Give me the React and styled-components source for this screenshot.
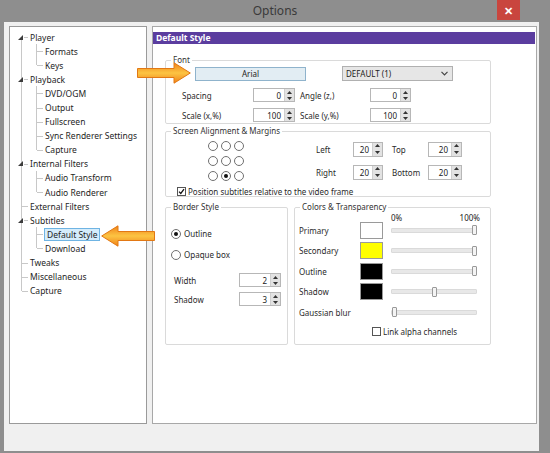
import React from "react";
import styled, { createGlobalStyle } from "styled-components";

const GlobalStyle = createGlobalStyle`
  html, body {
    margin: 0;
    padding: 0;
    background: #8e8e8e;
  }
  body {
    font-family: "Noto Sans", "Open Sans", sans-serif;
    color: #222;
  }
`;

const tree = [
  { label: "Player", children: ["Formats", "Keys"] },
  {
    label: "Playback",
    children: ["DVD/OGM", "Output", "Fullscreen", "Sync Renderer Settings", "Capture"],
  },
  { label: "Internal Filters", children: ["Audio Transform", "Audio Renderer"] },
  { label: "External Filters" },
  { label: "Subtitles", children: ["Default Style", "Download"] },
  { label: "Tweaks" },
  { label: "Miscellaneous" },
  { label: "Capture" },
];

const colors = [
  { name: "Primary", swatch: "#ffffff", alpha: 100 },
  { name: "Secondary", swatch: "#ffff00", alpha: 100 },
  { name: "Outline", swatch: "#000000", alpha: 100 },
  { name: "Shadow", swatch: "#000000", alpha: 50 },
  { name: "Gaussian blur", alpha: 0 },
];

/* ---------- window frame ---------- */

const Window = styled.div`
  position: relative;
  width: 550px;
  height: 453px;
  background: #8e8e8e;
  display: flex;
  flex-direction: column;
  overflow: hidden;
`;

const TitleBar = styled.div`
  height: 22px;
  display: grid;
  grid-template-columns: 1fr auto 1fr;
  align-items: start;
`;

const Title = styled.div`
  grid-column: 2;
  line-height: 22px;
  font-size: 12px;
  color: #3a3a3a;
`;

const CloseButton = styled.div`
  grid-column: 3;
  justify-self: end;
  margin-right: 30px;
  width: 23px;
  height: 20px;
  background: #c9453e;
  color: #fff;
  font-size: 11px;
  font-weight: bold;
  display: flex;
  align-items: center;
  justify-content: center;
`;

const Client = styled.div`
  flex: 1;
  margin: 0 11px 2px 4px;
  background: #f0f0f0;
  padding: 4px 2px 27px 5px;
  display: flex;
  gap: 5px;
`;

/* ---------- navigation tree ---------- */

const TreePanel = styled.div`
  width: 138px;
  box-sizing: border-box;
  background: #fff;
  border: 1px solid #9a9a9a;
  padding: 3px 0 0 4px;
  font-size: 8.5px;
`;

const TreeRow = styled.div`
  height: 14.1px;
  display: flex;
  align-items: center;
`;

const Guide = styled.span`
  position: relative;
  flex: 0 0 15px;
  height: 100%;
  display: flex;
  align-items: center;

  &::before {
    content: "";
    display: ${(p) => (p.$v ? "block" : "none")};
    position: absolute;
    left: 7px;
    top: ${(p) => (p.$v === "bottom" ? "50%" : "0")};
    height: ${(p) => (p.$v === "full" ? "100%" : "50%")};
    border-left: 1px solid #c8c8c8;
  }

  &::after {
    content: "";
    display: ${(p) => (p.$h ? "block" : "none")};
    position: absolute;
    left: ${(p) => (p.$toggle ? 10 : 8)}px;
    top: 50%;
    width: ${(p) => (p.$toggle ? 4 : 6)}px;
    border-top: 1px solid #c8c8c8;
  }

  svg {
    position: relative;
    margin-left: 4px;
  }
`;

const TreeLabel = styled.span`
  margin-left: ${(p) => (p.$selected ? 0 : 1)}px;
  padding: 0 ${(p) => (p.$selected ? 2 : 0)}px;
  line-height: 11px;
  white-space: nowrap;
  color: #1e1e1e;
  background: ${(p) => (p.$selected ? "#d5ecfb" : "transparent")};
  border: ${(p) => (p.$selected ? "1px solid #6fb4e3" : "none")};
`;

const Expander = () => (
  <svg width="5" height="5" viewBox="0 0 5 5">
    <path d="M5 0 L5 5 L0 5 Z" fill="#3c3c3c" />
  </svg>
);

function TreeView() {
  const rows = [];
  tree.forEach((node, i) => {
    const lastRoot = i === tree.length - 1;
    if (node.children) {
      rows.push({
        key: node.label,
        label: node.label,
        guides: [{ v: i === 0 ? "bottom" : "full", h: true, toggle: true }],
      });
      node.children.forEach((child, j) => {
        const lastChild = j === node.children.length - 1;
        rows.push({
          key: node.label + "/" + child,
          label: child,
          selected: child === "Default Style",
          guides: [{ v: "full" }, { v: lastChild ? "top" : "full", h: true }],
        });
      });
    } else {
      rows.push({
        key: node.label,
        label: node.label,
        guides: [{ v: lastRoot ? "top" : "full", h: true }],
      });
    }
  });

  return (
    <TreePanel>
      {rows.map((row) => (
        <TreeRow key={row.key}>
          {row.guides.map((g, k) => (
            <Guide key={k} $v={g.v} $h={g.h} $toggle={g.toggle}>
              {g.toggle && <Expander />}
            </Guide>
          ))}
          <TreeLabel $selected={row.selected}>{row.label}</TreeLabel>
        </TreeRow>
      ))}
    </TreePanel>
  );
}

/* ---------- settings page ---------- */

const Page = styled.div`
  flex: 1;
  background: #fff;
  border: 1px solid #a8a8a8;
  padding: 5px 1px 0 0;
  display: flex;
  flex-direction: column;
  font-size: 8px;
`;

const PageHeader = styled.div`
  height: 12px;
  line-height: 12px;
  background: #5b3d9f;
  color: #fff;
  font-weight: bold;
  font-size: 8.5px;
  padding-left: 3px;
`;

const Content = styled.div`
  width: 326px;
  padding: 11px 0 0 12px;
  display: flex;
  flex-direction: column;
`;

const Group = styled.fieldset`
  margin: ${(p) => p.$top || 0}px 0 0;
  width: ${(p) => p.$w}px;
  height: ${(p) => p.$h}px;
  box-sizing: border-box;
  border: 1px solid #dadada;
  border-radius: 2px;
  padding: ${(p) => p.$pad || 0}px 0 0 0;
  min-width: 0;
`;

const Legend = styled.legend`
  margin-left: 5px;
  padding: 0 2px;
  line-height: 10px;
  font-size: 8px;
  color: #333;
`;

const Row = styled.div`
  display: flex;
  align-items: center;
  padding-left: ${(p) => p.$indent || 0}px;
  margin-top: ${(p) => p.$top || 0}px;
  gap: ${(p) => p.$gap || 0}px;
`;

const Label = styled.span`
  white-space: nowrap;
  color: #2a2a2a;
`;

const FontButton = styled.div`
  width: 111px;
  height: 14px;
  box-sizing: border-box;
  background: #e2edf3;
  border: 1px solid #8fb3cc;
  display: flex;
  align-items: center;
  justify-content: center;
`;

const Select = styled.div`
  margin-left: 36px;
  width: 111px;
  height: 15px;
  box-sizing: border-box;
  background: #e6e6e6;
  border: 1px solid #b0b0b0;
  display: flex;
  align-items: center;
  justify-content: space-between;
  padding: 0 4px 0 3px;
`;

const SpinGrid = styled.div`
  display: grid;
  grid-template-columns: ${(p) => p.$cols};
  row-gap: ${(p) => p.$gap}px;
  align-items: center;
  padding-left: ${(p) => p.$indent || 0}px;
  margin-top: ${(p) => p.$top || 0}px;
`;

const GridLabel = styled(Label)`
  padding-left: ${(p) => p.$pad || 0}px;
`;

const SpinBox = styled.div`
  display: flex;
  width: ${(p) => p.$w}px;
  height: ${(p) => p.$h}px;
  box-sizing: border-box;
  border: 1px solid #b7b7b7;
  background: #fff;
`;

const SpinValue = styled.span`
  flex: 1;
  display: flex;
  align-items: center;
  justify-content: flex-end;
  padding-right: 3px;
`;

const SpinArrows = styled.div`
  width: 9px;
  display: flex;
  flex-direction: column;
  background: #e2e2e2;
  border-left: 1px solid #cfcfcf;
`;

const SpinArrow = styled.span`
  flex: 1;
  display: flex;
  align-items: center;
  justify-content: center;
`;

const Spin = ({ value, w = 42, h = 14 }) => (
  <SpinBox $w={w} $h={h}>
    <SpinValue>{value}</SpinValue>
    <SpinArrows>
      <SpinArrow>
        <svg width="5" height="3" viewBox="0 0 5 3">
          <path d="M2.5 0 L5 3 L0 3 Z" fill="#333" />
        </svg>
      </SpinArrow>
      <SpinArrow>
        <svg width="5" height="3" viewBox="0 0 5 3">
          <path d="M0 0 L5 0 L2.5 3 Z" fill="#333" />
        </svg>
      </SpinArrow>
    </SpinArrows>
  </SpinBox>
);

const RadioGrid = styled.div`
  margin-left: 42px;
  display: grid;
  grid-template-columns: repeat(3, 10px);
  column-gap: 3px;
  row-gap: 5px;
`;

const RadioDot = styled.span`
  width: 10px;
  height: 10px;
  box-sizing: border-box;
  border-radius: 50%;
  border: 1px solid #707070;
  background: #fff;
  display: flex;
  align-items: center;
  justify-content: center;
  flex-shrink: 0;

  &::after {
    content: "";
    display: ${(p) => (p.$on ? "block" : "none")};
    width: 4px;
    height: 4px;
    border-radius: 50%;
    background: #111;
  }
`;

const CheckBox = styled.span`
  width: 9px;
  height: 9px;
  box-sizing: border-box;
  border: 1px solid #555;
  background: #fff;
  display: flex;
  align-items: center;
  justify-content: center;
  flex-shrink: 0;
`;

const Tick = () => (
  <svg width="7" height="7" viewBox="0 0 7 7">
    <path d="M1 3.6 L2.8 5.4 L6 1.2" fill="none" stroke="#111" strokeWidth="1.3" />
  </svg>
);

const MarginGrid = styled(SpinGrid)`
  margin-left: 72px;
  margin-top: -1px;
`;

const BottomRow = styled.div`
  display: flex;
  gap: 6px;
  margin-top: 5px;
`;

const PercentScale = styled.div`
  margin-left: 96px;
  width: 89px;
  height: 10px;
  line-height: 10px;
  display: flex;
  justify-content: space-between;
`;

const ColorGrid = styled.div`
  display: grid;
  grid-template-columns: 53px 23px 86px;
  column-gap: 8px;
  grid-auto-rows: 17px;
  row-gap: 3.5px;
  align-items: center;
  padding-left: 4px;
  margin-top: -1.5px;
`;

const Swatch = styled.span`
  width: 23px;
  height: 17px;
  box-sizing: border-box;
  border: 1px solid #9a9a9a;
  background: ${(p) => p.$color};
`;

const Track = styled.div`
  position: relative;
  height: 3px;
  background: #e8e8e8;
  border: 1px solid #dadada;
  border-radius: 1px;
`;

const Thumb = styled.span`
  position: absolute;
  top: 50%;
  width: 5px;
  height: 10px;
  margin: -5px 0 0 -2.5px;
  box-sizing: border-box;
  background: #f4f4f4;
  border: 1px solid #999;
  border-radius: 1px;
`;

/* ---------- callout arrows ---------- */

const Callout = styled.svg`
  position: absolute;
  left: ${(p) => p.$x}px;
  top: ${(p) => p.$y}px;
  overflow: visible;
`;

const Arrow = ({ x, y, flip, id }) => (
  <Callout $x={x} $y={y} width="54" height="22" viewBox="0 0 54 22">
    <defs>
      <linearGradient id={id} x1="0" y1="0" x2="0" y2="1">
        <stop offset="0" stopColor="#f08218" />
        <stop offset="0.5" stopColor="#fcc443" />
        <stop offset="1" stopColor="#f08218" />
      </linearGradient>
    </defs>
    <g transform={flip ? "translate(54 0) scale(-1 1)" : undefined}>
      <path
        d="M0.5 6.5 L37 6.5 L37 0.8 L53.3 11 L37 21.2 L37 15.5 L0.5 15.5 Z"
        fill={`url(#${id})`}
        stroke="#e27814"
        strokeWidth="1"
        strokeLinejoin="round"
      />
    </g>
  </Callout>
);

function StylePage() {
  return (
    <Page>
      <PageHeader>Default Style</PageHeader>
      <Content>
        <Group $w={326} $h={69} $pad={1}>
          <Legend>Font</Legend>
          <Row $indent={29}>
            <FontButton>Arial</FontButton>
            <Select>
              <span>DEFAULT (1)</span>
              <svg width="7" height="5" viewBox="0 0 7 5">
                <path d="M0.5 0.8 L3.5 3.8 L6.5 0.8" fill="none" stroke="#444" strokeWidth="1.2" />
              </svg>
            </Select>
          </Row>
          <SpinGrid $cols="71px 42px 75px 41px" $gap={6} $indent={16} $top={7}>
            <GridLabel>Spacing</GridLabel>
            <Spin value="0" />
            <GridLabel $pad={5}>Angle (z,)</GridLabel>
            <Spin value="0" w={41} />
            <GridLabel>Scale (x,%)</GridLabel>
            <Spin value="100" />
            <GridLabel $pad={5}>Scale (y,%)</GridLabel>
            <Spin value="100" w={41} />
          </SpinGrid>
        </Group>

        <Group $w={326} $h={71} $pad={5} $top={2}>
          <Legend>Screen Alignment &amp; Margins</Legend>
          <Row>
            <RadioGrid>
              {[0, 1, 2, 3, 4, 5, 6, 7, 8].map((n) => (
                <RadioDot key={n} $on={n === 7} />
              ))}
            </RadioGrid>
            <MarginGrid $cols="37px 30px 45px 34px" $gap={8}>
              <GridLabel>Left</GridLabel>
              <Spin value="20" w={30} h={15} />
              <GridLabel $pad={9}>Top</GridLabel>
              <Spin value="20" w={34} h={15} />
              <GridLabel>Right</GridLabel>
              <Spin value="20" w={30} h={15} />
              <GridLabel $pad={9}>Bottom</GridLabel>
              <Spin value="20" w={34} h={15} />
            </MarginGrid>
          </Row>
          <Row $indent={11} $top={5} $gap={2}>
            <CheckBox>
              <Tick />
            </CheckBox>
            <Label>Position subtitles relative to the video frame</Label>
          </Row>
        </Group>

        <BottomRow>
          <Group $w={123} $h={143} $pad={16}>
            <Legend>Border Style</Legend>
            <Row $indent={5} $gap={3}>
              <RadioDot $on />
              <Label>Outline</Label>
            </Row>
            <Row $indent={5} $gap={3} $top={10}>
              <RadioDot />
              <Label>Opaque box</Label>
            </Row>
            <SpinGrid $cols="65px 42px" $gap={5} $indent={8} $top={13}>
              <GridLabel>Width</GridLabel>
              <Spin value="2" />
              <GridLabel>Shadow</GridLabel>
              <Spin value="3" />
            </SpinGrid>
          </Group>

          <Group $w={197} $h={143} $pad={1}>
            <Legend>Colors &amp; Transparency</Legend>
            <PercentScale>
              <span>0%</span>
              <span>100%</span>
            </PercentScale>
            <ColorGrid>
              {colors.map((c) => (
                <React.Fragment key={c.name}>
                  <Label>{c.name}</Label>
                  {c.swatch ? <Swatch $color={c.swatch} /> : <span />}
                  <Track>
                    <Thumb style={{ left: `calc(2px + (100% - 4px) * ${c.alpha / 100})` }} />
                  </Track>
                </React.Fragment>
              ))}
            </ColorGrid>
            <Row $indent={77} $top={5} $gap={2}>
              <CheckBox />
              <Label>Link alpha channels</Label>
            </Row>
          </Group>
        </BottomRow>
      </Content>
    </Page>
  );
}

export default function App() {
  return (
    <Window>
      <GlobalStyle />
      <TitleBar>
        <Title>Options</Title>
        <CloseButton>✕</CloseButton>
      </TitleBar>
      <Client>
        <TreeView />
        <StylePage />
      </Client>
      <Arrow id="arrowFont" x={137} y={62} />
      <Arrow id="arrowTree" x={101} y={225} flip />
    </Window>
  );
}
